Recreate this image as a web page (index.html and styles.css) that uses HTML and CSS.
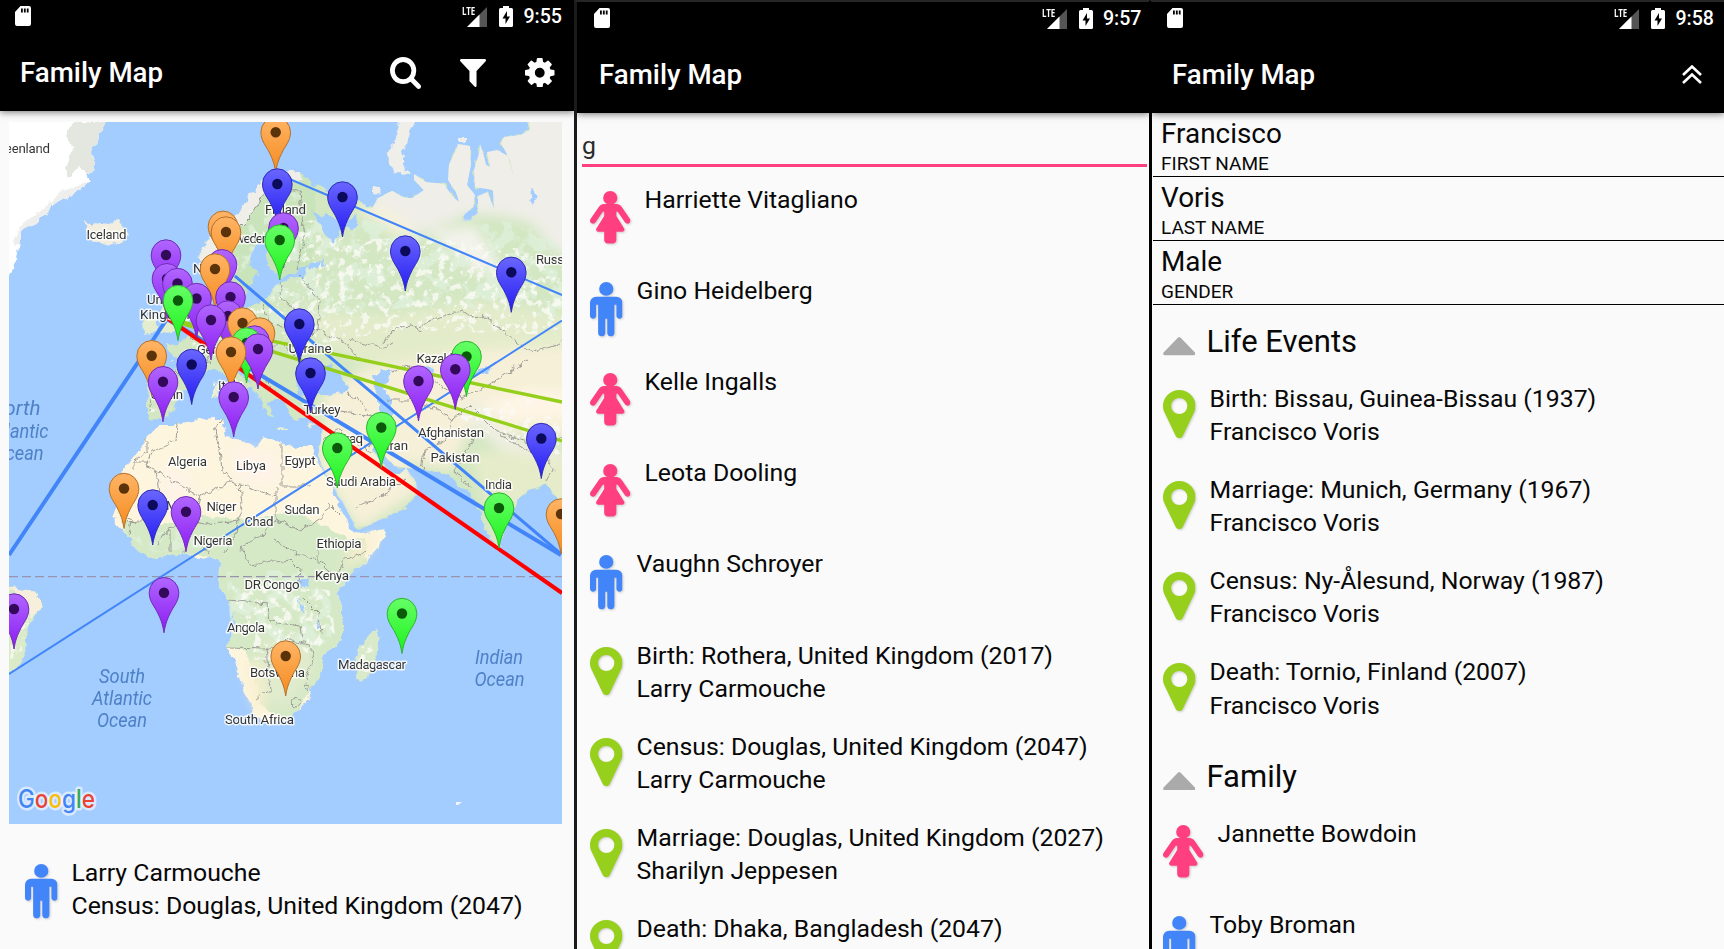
FILE: index.html
```html
<!DOCTYPE html>
<html lang="en">
<head>
<meta charset="utf-8">
<title>Family Map</title>
<link rel="stylesheet" href="styles.css">
</head>
<body>
<svg class="defs" width="0" height="0" aria-hidden="true">
  <defs>
    <symbol id="male" viewBox="0 160 1024 1760" preserveAspectRatio="none"><path d="M1024 832v416q0 40-28 68t-68 28-68-28-28-68v-352h-64v912q0 46-33 79t-79 33-79-33-33-79v-464h-64v464q0 46-33 79t-79 33-79-33-33-79v-912h-64v352q0 40-28 68t-68 28-68-28-28-68v-416q0-80 56-136t136-56h640q80 0 136 56t56 136zm-288-448q0 93-65.500 158.500t-158.500 65.500-158.500-65.500-65.500-158.500 65.500-158.500 158.500-65.500 158.500 65.500 65.500 158.500z"/></symbol>
    <symbol id="female" viewBox="0 160 1280 1760" preserveAspectRatio="none"><path d="M1280 1120q0 40-28 68t-68 28q-51 0-80-43l-227-341h-45v132l247 411q9 15 9 33 0 26-19 45t-45 19h-192v272q0 46-33 79t-79 33h-160q-46 0-79-33t-33-79v-272h-192q-26 0-45-19t-19-45q0-18 9-33l247-411v-132h-45l-227 341q-29 43-80 43-40 0-68-28t-28-68q0-29 16-53l256-384q73-107 176-107h384q103 0 176 107l256 384q16 24 16 53zm-416-736q0 93-65.500 158.500t-158.500 65.500-158.500-65.500-65.500-158.500 65.500-158.500 158.500-65.500 158.500 65.500 65.500 158.500z"/></symbol>
    <symbol id="marker" viewBox="0 128 1024 1536" preserveAspectRatio="none"><path d="M768 640q0-106-75-181t-181-75-181 75-75 181 75 181 181 75 181-75 75-181zm256 0q0 109-33 179l-364 774q-16 33-47.500 52t-67.500 19-67.500-19-46.500-52l-365-774q-33-70-33-179 0-212 150-362t362-150 362 150 150 362z"/></symbol>
    <symbol id="caret" viewBox="0 0 32 18" preserveAspectRatio="none"><path d="M14.600 .8Q16-.6 17.400.8L31.400 15Q32.600 18 30 18H2Q-.6 18 .6 15z"/></symbol>
    <symbol id="sd" viewBox="0 0 16 20"><path fill-rule="evenodd" d="M5.500 0H14q2 0 2 2v16q0 2-2 2H2q-2 0-2-2V6zM6 2.500v4h1.800v-4zm2.900 0v4h1.800v-4zm2.900 0v4h1.800v-4z"/></symbol>
    <symbol id="signal" viewBox="0 0 24 21"><path d="M24 1v20H4z" fill="#555"/><path d="M16.500 8.500V21H4z"/></symbol>
    <symbol id="battery" viewBox="0 0 14 21"><path fill-rule="evenodd" d="M4 0h6v2h2.500Q14 2 14 3.500v16q0 1.500-1.500 1.500h-11Q0 21 0 19.500v-16Q0 2 1.500 2H4zM8 5L3.500 12.500h3V18L11 10.500H8z"/></symbol>
    <linearGradient id="gOrange" x1="0" y1="0" x2="0" y2="1"><stop offset="0" stop-color="#ffb566"/><stop offset="1" stop-color="#f58a1e"/></linearGradient>
    <linearGradient id="gPurple" x1="0" y1="0" x2="0" y2="1"><stop offset="0" stop-color="#b066ff"/><stop offset="1" stop-color="#8c1cf2"/></linearGradient>
    <linearGradient id="gBlue" x1="0" y1="0" x2="0" y2="1"><stop offset="0" stop-color="#6a66ff"/><stop offset="1" stop-color="#241cf2"/></linearGradient>
    <linearGradient id="gGreen" x1="0" y1="0" x2="0" y2="1"><stop offset="0" stop-color="#66ff66"/><stop offset="1" stop-color="#1cf21c"/></linearGradient>
    <path id="drop" d="M0 40C-1 34-2 29-6 21C-9 14-14.800 9-14.800 0A14.800 15.200 0 0 1 14.800 0C14.800 9 9 14 6 21C2 29 1 34 0 40z"/>
    <g id="po"><use href="#drop" fill="url(#gOrange)" stroke="#b3702b"/><circle r="5.200" fill="#5a330a"/></g>
    <g id="pp"><use href="#drop" fill="url(#gPurple)" stroke="#6f2bb3"/><circle r="5.200" fill="#330a5a"/></g>
    <g id="pb"><use href="#drop" fill="url(#gBlue)" stroke="#2f2bb3"/><circle r="5.200" fill="#0c0a5a"/></g>
    <g id="pg"><use href="#drop" fill="url(#gGreen)" stroke="#2bb32b"/><circle r="5.200" fill="#0a5a0a"/></g>
    <filter id="rough" filterUnits="userSpaceOnUse" x="0" y="110" width="575" height="720"><feTurbulence type="fractalNoise" baseFrequency=".12" numOctaves="3" seed="4" result="n"/><feDisplacementMap in="SourceGraphic" in2="n" scale="8" xChannelSelector="R" yChannelSelector="G"/></filter>
    <filter id="speckle" filterUnits="userSpaceOnUse" x="0" y="110" width="575" height="720"><feTurbulence type="fractalNoise" baseFrequency=".13" numOctaves="4" seed="9"/><feColorMatrix values="0 0 0 0 .96  0 0 0 0 .96  0 0 0 0 .91  9 0 0 0 -4.900" result="s"/><feComposite in="s" in2="SourceGraphic" operator="in"/></filter>
    <filter id="woods" filterUnits="userSpaceOnUse" x="0" y="110" width="575" height="720"><feTurbulence type="fractalNoise" baseFrequency=".06" numOctaves="5" seed="21"/><feColorMatrix values="0 0 0 0 .74  0 0 0 0 .87  0 0 0 0 .71  10 0 0 0 -4.900" result="s"/><feComposite in="s" in2="SourceGraphic" operator="in"/></filter>
    <filter id="soft" filterUnits="userSpaceOnUse" x="0" y="60" width="640" height="780"><feGaussianBlur stdDeviation="6"/></filter>
    <path id="eurasia" d="M300 186L313 184 332 194 355 198 366 206 362 214 357 222 358 217 364 207 372 208 378 198 392 191 405 198 412 198 424 190 414 180 414 174 426 182 444 184 452 196 459 202 456 192 448 180 449 165 455 152 458 144 470 146 471 165 467 185 475 195 473 207 461 218 470 220 478 212 478 196 487 192 494 208 493 190 475 187 474 170 480 150 480 144 484 156 486 165 490 167 487 152 497 150 508 156 514 178 510 160 501 143 504 137 520 135 530 130 528 115H580V520L562 503 555 495 546 483 537 487 528 490 517 500 513 512 505 522 503 534 499 547 491 540 482 520 475 500 466 490 458 487 450 475 432 471 407 468 395 466 384 455 375 445 372 450 384 466 392 474 400 474 406 468 416 482 418 490 405 508 388 516 370 525 355 528 350 516 338 495 326 475 318 455 321 440 323 425 310 418 297 421 288 414 284 402 276 399 268 402 274 416 267 414 258 395 250 381 240 368 230 360 232 368 245 378 254 386 247 388 246 400 240 392 228 378 217 369 205 373 196 370 192 382 182 392 174 409 163 420 150 418 145 408 148 390 147 375 156 370 175 372 178 360 168 349 166 344 180 343 190 335 200 325 210 315 213 298 220 288 223 280 229 285 228 302 240 309 258 304 268 296 272 287 282 281 300 276 310 264z"/>
    <clipPath id="asia"><use href="#eurasia"/></clipPath>
  </defs>
</svg>

<main class="screens">
  <section class="screen screen-map">
    <header class="appbar">
      <div class="status">
        <svg class="sd"><use href="#sd"/></svg>
        <span class="cell"><svg class="signal"><use href="#signal"/></svg><span class="lte">LTE</span></span>
        <svg class="battery"><use href="#battery"/></svg>
        <span class="clock">9:55</span>
      </div>
      <div class="toolbar">
        <h1>Family Map</h1>
        <svg class="t-search" viewBox="0 0 1664 1664" preserveAspectRatio="none"><path d="M1152 704q0-185-131.500-316.500t-316.500-131.500-316.500 131.500-131.500 316.500 131.500 316.500 316.500 131.500 316.500-131.500 131.500-316.500zm512 832q0 52-38 90t-90 38q-54 0-90-38l-343-342q-179 124-399 124-143 0-273.500-55.500t-225-150-150-225-55.500-273.500 55.500-273.500 150-225 225-150 273.500-55.500 273.500 55.500 225 150 150 225 55.500 273.500q0 220-124 399l343 343q37 37 37 90z"/></svg>
        <svg class="t-filter" viewBox="0 0 1408 1408" preserveAspectRatio="none"><path d="M1403 39q17 41-14 70l-493 493v742q0 42-39 59-13 5-25 5-27 0-45-19l-256-256q-19-19-19-45v-486l-493-493q-31-29-14-70 17-39 59-39h1280q42 0 59 39z"/></svg>
        <svg class="t-cog" viewBox="0 -128 1536 1536" preserveAspectRatio="none"><path d="M1024 640q0-106-75-181t-181-75-181 75-75 181 75 181 181 75 181-75 75-181zm512-109v222q0 12-8 23t-20 13l-185 28q-19 54-39 91 35 50 107 138 10 12 10 25t-9 23q-27 37-99 108t-94 71q-12 0-26-9l-138-108q-44 23-91 38-16 136-29 186-7 28-36 28h-222q-14 0-24.500-8.500t-11.500-21.500l-28-184q-49-16-90-37l-141 107q-10 9-25 9-14 0-25-11-126-114-165-168-7-10-7-23 0-12 8-23 15-21 51-66.500t54-70.500q-27-50-41-99l-183-27q-13-2-21-12.500t-8-23.500v-222q0-12 8-23t19-13l186-28q14-46 39-92-40-57-107-138-10-12-10-24 0-10 9-23 26-36 98.500-107.500t94.500-71.500q13 0 26 10l138 107q44-23 91-38 16-136 29-186 7-28 36-28h222q14 0 24.500 8.500t11.500 21.500l28 184q49 16 90 37l142-107q9-9 24-9 13 0 25 10 129 119 165 170 7 8 7 22 0 12-8 23-15 21-51 66.500t-54 70.500q26 50 41 98l183 28q13 2 21 12.500t8 23.500z"/></svg>
      </div>
    </header>

    <svg class="map" viewBox="9 122 553 702">
      <rect x="9" y="122" width="553" height="702" fill="#a3ccff"/>
      <g filter="url(#rough)">
        <!-- Greenland -->
        <path fill="#fff" d="M0 110H108L100 132 97 145 92 150 95 172 86 175 90 180 80 190 65 200 52 203 50 212 40 218 33 226 22 230 17 248 18 254 12 270 0 290z"/>
        <path fill="#e3e7e0" d="M72 122H106L100 132 97 145 92 150 95 172 86 175 80 165 68 178 66 165 74 150 66 138z"/>
        <path fill="#eeeeec" d="M90 180L80 190 65 200 52 203 50 212 40 218 33 226 22 230 17 248 14 245 20 226 34 216 46 204 56 194 76 186z"/>
        <!-- Iceland -->
        <path fill="#f1eee0" d="M86 220L92 226 98 223 108 224 119 219 123 225 128 234 122 241 106 247 96 241 88 240 93 234 86 230z"/>
        <!-- Novaya Zemlya and islands -->
        <path fill="#efeee9" d="M401 118H415L409 138 402 155 406 168 410 174 398 173 388 163 387 154 395 140zM458 138h8v4h-8zM373 187l7 1-1 6-6 1z"/>
        <!-- Eurasia -->
        <use href="#eurasia" fill="#d3e7c2"/>
        <!-- Scandinavia -->
        <path fill="#c9e4bb" d="M204 274L198 258 207 240 225 225 240 211 250 195 262 181 280 170 300 172 316 184 312 262 296 272 282 277 270 271 266 256 272 240 278 232 270 226 262 240 252 250 250 265 258 275 248 287 243 302 235 308 228 290 225 276 215 280z"/>
        <path fill="#efeee9" d="M204 270L198 258 207 240 225 225 240 211 250 195 262 181 280 170 300 172 304 180 280 182 262 196 252 214 240 226 224 244 216 262z"/>
        <!-- Britain, Ireland -->
        <path fill="#e4eecf" d="M158 268L171 262 174 282 188 306 192 322 180 329 158 334 166 320 160 300zM143 318L156 314 156 330 144 336z"/>
        <!-- Mediterranean islands -->
        <path fill="#e9f0d3" d="M228 402l12-1-3 7zM213 384l5-1 1 14-6 1zM276 426l10 1v2h-10zM307 425l9-2-4 5z"/>
        <!-- Africa -->
        <path fill="#fdf5de" d="M222 417L225 437 240 440 257 448 262 440 273 438 284 444 297 447 312 447 322 470 336 497 345 520 352 532 366 533 386 529 380 546 366 562 348 577 337 593 343 610 343 638 322 657 322 673 312 687 308 700 298 712 286 720 268 724 258 719 252 706 243 690 238 667 228 647 235 622 228 600 218 582 220 563 210 557 200 559 187 553 173 555 152 559 137 549 125 534 115 525 114 512 122 487 123 470 133 457 143 447 147 437 160 425 173 425 193 420 215 418z"/>
        <path fill="#d6e9c6" d="M122 520L160 524 205 516 250 520 290 510 320 524 346 538 366 540 366 562 348 577 337 593 343 610 343 638 322 657 322 673 312 687 298 712 286 720 262 706 246 650 228 646 235 622 228 600 218 582 220 563 210 557 187 553 152 559 137 549 125 534z"/>
        <!-- Madagascar, South America, Kerguelen -->
        <path fill="#d8eaca" d="M377 628L381 637 377 655 368 678 362 681 356 677 357 650 363 642z"/>
        <path fill="#dbebc8" d="M0 585L20 588 35 592 43 604 41 612 27 625 25 655 15 670 0 680z"/>
        <path fill="#f6efdc" d="M9 588L20 588 35 592 43 604 41 612 30 618 22 600z"/>
      </g>
      <path fill="#f4f6f8" d="M456 802h6l-4 3h-2z"/>
      <!-- climate tints, blurred into the land -->
      <g clip-path="url(#asia)">
        <g filter="url(#soft)">
          <path fill="#efeee8" d="M372 150L600 90V260L555 252 530 222 500 216 470 214 440 226 415 234 395 224 370 210z"/>
          <path fill="#f6f1dc" d="M352 206l30 0 24 14 14 20-24-4z"/>
          <path fill="#f3f3ec" d="M425 232l50-6 20 30 10 24-30-8-22-22z"/>
          <path fill="#e3ecca" d="M290 310L380 315 420 310 480 300 600 320V370L400 380 330 350z"/>
          <path fill="#f6f0d8" d="M360 370L470 350 600 345V440L470 430 450 470 400 460 330 440 320 400z"/>
          <path fill="#fff5e6" d="M480 405l50-15 70 5v20l-90 5zM330 455l60 5 20 30-50 25z"/>
          <path fill="#f6f0d8" d="M315 430l60 10 30 20 15 30-60 40-40-60z"/>
          <path fill="#e6ecca" d="M470 452L600 450V500L500 550z"/>
          <path fill="#f0efe2" d="M462 400l20 4 30 34 50 14v8l-60-10-36-30z"/>
        </g>
      </g>
      <g filter="url(#soft)">
        <path fill="#fff3ea" d="M228 445l50 10v30l-40-4zM160 465l30 10v25h-26z" opacity=".8"/>
        <path fill="#f8efcf" d="M352 545l26-12-12 22-24 14zM244 660l10 46 12 8-4-50z"/>
        <path fill="#e1ebcd" d="M262 640l44 0 8 30-30 38-16-10z"/>
      </g>
      <!-- vegetation and open ground texture -->
      <path filter="url(#woods)" opacity=".8" d="M262 205L300 190 312 215 340 232 360 218 410 232 440 248 500 270 562 275V318L440 305 380 310 300 320 225 345 185 350 250 320 275 285 300 276 310 262 268 258zM470 228L500 220 540 230 562 250V280L500 268zM226 572L300 570 330 600 335 640 300 650 232 640zM130 535L185 530 215 548 190 548 150 553zM482 490L506 500 500 540zM228 235l22-14 10 16-14 30-14 14z"/>
      <path filter="url(#speckle)" opacity=".8" d="M262 230L312 220 350 240 400 238 460 240 562 255V335L400 330 310 345 240 345 190 355 170 362 220 320 300 285 310 262 270 262zM455 415L530 395 562 430V458L500 440zM232 585L330 590 335 635 300 660 250 660zM150 380h36l-16 32-20 0zM362 640l12 4-6 28-8 0zM12 610l20 0-8 40-14 16z"/>
      <!-- seas and lakes -->
      <g filter="url(#rough)" fill="#a3ccff">
        <path d="M312 212L330 217 345 222 357 216 358 225 340 230 334 244 326 238 320 226z"/>
        <path d="M296 378L300 364 312 358 318 366 330 364 346 382 347 392 330 395 312 391 298 396z"/>
        <path d="M372 378L380 370 392 370 388 380 384 386 392 400 392 416 384 420 378 410 378 396z"/>
        <path d="M425 366l8 2-1 9-7-2zM470 372l20-6 2 3-20 8zM310 262l10-2-2 8-9 3zM298 268l8 0-2 10-8 0zM322 258l4 8-5 0zM530 186l8 10-6 12z"/>
        <path d="M298 578l11 0-1 9-9 1zM298 596l4 10 3 8-4-3zM317 615l4 14-3 1z"/>
      </g>
      <!-- national borders -->
      <g class="borders" filter="url(#rough)">
        <path d="M222 417L216 430 220 450 222 470 230 480M147 437L147 452 133 462M177 424L176 440 152 452 146 465 200 497 230 482 240 484 276 496M282 444V486H312M276 486V497L276 520M134 470V462H147M156 470 160 500 158 520 124 522M118 512l14 8-2 14M200 497L194 520 170 528 158 545M194 522 205 524 238 520 242 505 240 484M238 520L236 535 225 552M276 520L262 535 240 548 252 565M276 520 300 530 318 520 330 505 340 515M275 540 300 555 318 560 330 572M318 560 336 576 345 560 366 552M250 565 290 560 300 570 298 590M228 600 268 604 270 622 300 626 302 640M228 647 266 648 270 690 256 700M266 650 290 640 310 644 313 660 305 680M170 530v22M187 525l-2 28M200 540l10 14M318 545v20M300 595l20 20 2 20"/>
        <path d="M293 706c-4-6 0-10 5-8s2 8-2 9zM304 684l8 1-4 6z"/>
        <path d="M252 214L262 196 285 192 300 190 304 240 296 270M228 290L232 250 240 226 252 214"/>
        <path d="M280 281L282 300 296 310 318 330 300 340 270 320 262 306M300 276 320 300 318 330 345 342 360 360M216 318 228 330 250 326 262 345 285 345 296 358M190 335 204 345 210 365M230 345 245 352 262 348 256 370 275 392M148 375 156 382 152 400 150 412M175 372 198 376M236 325V305"/>
        <path d="M420 326L440 318 462 310 472 318 488 316 500 330 520 345 530 352 562 342M380 345 394 330 410 326 424 330M430 385 410 400 386 400M392 372 410 365 440 385 462 398 480 390 500 378 528 360M414 402 440 410 452 420 445 440 425 450 422 470M452 420 470 405 480 415 495 430 520 440 545 445 562 438M330 410 350 412 372 416 380 440 370 448M322 440 340 430 356 445 372 452M355 508 382 496 405 480M470 488 455 470 468 448 480 432M545 450 552 470 546 480M348 393 360 400 368 412M500 435l35 20 12-6M350 340l30 8 14-4"/>
      </g>
      <path class="equator" d="M9 576.700H562"/>

      <g class="ocean">
        <text x="-10" y="415" textLength="50.500" lengthAdjust="spacingAndGlyphs">North</text><text x="-11.500" y="437.500" textLength="60" lengthAdjust="spacingAndGlyphs">Atlantic</text><text x="-6.500" y="460" textLength="50" lengthAdjust="spacingAndGlyphs">Ocean</text>
        <text x="99" y="682.500" textLength="46" lengthAdjust="spacingAndGlyphs">South</text><text x="92" y="704.500" textLength="60" lengthAdjust="spacingAndGlyphs">Atlantic</text><text x="97" y="726.500" textLength="50" lengthAdjust="spacingAndGlyphs">Ocean</text>
        <text x="475" y="664" textLength="48" lengthAdjust="spacingAndGlyphs">Indian</text><text x="474.500" y="686" textLength="50" lengthAdjust="spacingAndGlyphs">Ocean</text>
      </g>

      <g class="routes">
        <path class="thin" d="M279 174.500L562 295M562 320.500L9 674"/>
        <path class="mid" d="M222 265L561 554"/>
        <path class="thick" d="M167 319L9 555M167 319L561 555"/>
        <path class="lime" d="M167 319L562 402M167 319L562 441"/>
        <path class="red" d="M167 318L562 593"/>
      </g>

      <g class="country">
        <text x="-8" y="152.500" textLength="58">Greenland</text><text x="86.500" y="238.500" textLength="40">Iceland</text>
        <text x="265" y="213.500" textLength="41">Finland</text><text x="228" y="243" textLength="41">Sweden</text>
        <text x="193" y="273" textLength="44">Norway</text><text x="147" y="304" textLength="38">United</text><text x="140" y="318.500" textLength="54">Kingdom</text>
        <text x="197" y="354" textLength="50">Germany</text><text x="288.500" y="353" textLength="43">Ukraine</text><text x="218" y="390" textLength="24">Italy</text><text x="151" y="399" textLength="32">Spain</text>
        <text x="536" y="263.500" textLength="38">Russia</text><text x="416.500" y="362.500" textLength="64">Kazakhstan</text><text x="303.500" y="413.500" textLength="37">Turkey</text><text x="343" y="443" textLength="20">Iraq</text><text x="386" y="450" textLength="22">Iran</text>
        <text x="418" y="436.500" textLength="66">Afghanistan</text><text x="430.500" y="461.500" textLength="49">Pakistan</text><text x="485" y="488.500" textLength="27">India</text><text x="326" y="485.500" textLength="70">Saudi Arabia</text>
        <text x="168" y="465.500" textLength="39">Algeria</text><text x="236" y="470" textLength="30">Libya</text><text x="284.500" y="464.500" textLength="31">Egypt</text><text x="206.500" y="511" textLength="30">Niger</text><text x="166" y="510" textLength="22">Mali</text><text x="244.500" y="526" textLength="29">Chad</text><text x="284.500" y="514" textLength="35">Sudan</text><text x="193.500" y="544.500" textLength="39">Nigeria</text><text x="316.500" y="548" textLength="45">Ethiopia</text><text x="315" y="580" textLength="34">Kenya</text>
        <text x="244.500" y="588.500" textLength="55">DR Congo</text><text x="227" y="631.500" textLength="38">Angola</text><text x="250" y="677" textLength="55">Botswana</text><text x="225" y="723.500" textLength="69">South Africa</text><text x="338" y="669" textLength="68">Madagascar</text>
      </g>

      <g class="pins">
        <use href="#po" x="275.700" y="132.300"/><use href="#pb" x="277.300" y="184"/><use href="#pb" x="342.500" y="197"/>
        <use href="#po" x="223" y="226.300"/><use href="#pp" x="283.500" y="228"/><use href="#po" x="226" y="232"/><use href="#pg" x="279.700" y="240"/>
        <use href="#pb" x="405.300" y="251"/><use href="#pp" x="166" y="255"/><use href="#pp" x="222" y="264.700"/><use href="#po" x="215" y="269"/><use href="#pb" x="511.300" y="272.300"/>
        <use href="#pp" x="167" y="278.700"/><use href="#pp" x="177.500" y="283.500"/><use href="#pp" x="196.500" y="298.500"/><use href="#pp" x="230.500" y="297"/><use href="#pg" x="178" y="300.500"/>
        <use href="#pp" x="228" y="316"/><use href="#pp" x="211" y="320"/><use href="#po" x="242.500" y="323"/><use href="#pb" x="299.300" y="324"/><use href="#po" x="260" y="333"/>
        <use href="#pp" x="254.500" y="341"/><use href="#pg" x="246.500" y="343"/><use href="#pp" x="258" y="349"/><use href="#po" x="231" y="352"/><use href="#po" x="151.700" y="355.700"/>
        <use href="#pg" x="466.500" y="356.500"/><use href="#pb" x="191.700" y="364.500"/><use href="#pp" x="455.300" y="369.300"/><use href="#pb" x="310.500" y="373"/><use href="#pp" x="418.500" y="381"/>
        <use href="#pp" x="163" y="381.700"/><use href="#pp" x="233.700" y="397"/><use href="#pg" x="381.300" y="427.500"/><use href="#pb" x="541.300" y="438.500"/><use href="#pg" x="337.300" y="448"/>
        <use href="#po" x="124" y="488.500"/><use href="#pb" x="152.700" y="505"/><use href="#pg" x="499" y="508"/><use href="#pp" x="186" y="511.700"/><use href="#po" x="561" y="514"/>
        <use href="#pp" x="164" y="592.700"/><use href="#pp" x="14" y="609"/><use href="#pg" x="402" y="613.500"/><use href="#po" x="285.700" y="656"/>
      </g>
      <text class="google" x="18" y="807.500" textLength="77" lengthAdjust="spacingAndGlyphs"><tspan fill="#4285f4">G</tspan><tspan fill="#ea4335">o</tspan><tspan fill="#fbbc05">o</tspan><tspan fill="#4285f4">g</tspan><tspan fill="#34a853">l</tspan><tspan fill="#ea4335">e</tspan></text>
    </svg>

    <div class="row selected"><svg class="icon male"><use href="#male"/></svg><p>Larry Carmouche<br>Census: Douglas, United Kingdom (2047)</p></div>
  </section>

  <section class="screen screen-search">
    <header class="appbar">
      <div class="status">
        <svg class="sd"><use href="#sd"/></svg>
        <span class="cell"><svg class="signal"><use href="#signal"/></svg><span class="lte">LTE</span></span>
        <svg class="battery"><use href="#battery"/></svg>
        <span class="clock">9:57</span>
      </div>
      <div class="toolbar"><h1>Family Map</h1></div>
    </header>
    <div class="query">g</div>
    <div class="list">
      <div class="row"><svg class="icon female"><use href="#female"/></svg><p>Harriette Vitagliano</p></div>
      <div class="row"><svg class="icon male"><use href="#male"/></svg><p>Gino Heidelberg</p></div>
      <div class="row"><svg class="icon female"><use href="#female"/></svg><p>Kelle Ingalls</p></div>
      <div class="row"><svg class="icon female"><use href="#female"/></svg><p>Leota Dooling</p></div>
      <div class="row"><svg class="icon male"><use href="#male"/></svg><p>Vaughn Schroyer</p></div>
      <div class="row"><svg class="icon marker"><use href="#marker"/></svg><p>Birth: Rothera, United Kingdom (2017)<br>Larry Carmouche</p></div>
      <div class="row"><svg class="icon marker"><use href="#marker"/></svg><p>Census: Douglas, United Kingdom (2047)<br>Larry Carmouche</p></div>
      <div class="row"><svg class="icon marker"><use href="#marker"/></svg><p>Marriage: Douglas, United Kingdom (2027)<br>Sharilyn Jeppesen</p></div>
      <div class="row"><svg class="icon marker"><use href="#marker"/></svg><p>Death: Dhaka, Bangladesh (2047)</p></div>
    </div>
  </section>

  <section class="screen screen-person">
    <header class="appbar">
      <div class="status">
        <svg class="sd"><use href="#sd"/></svg>
        <span class="cell"><svg class="signal"><use href="#signal"/></svg><span class="lte">LTE</span></span>
        <svg class="battery"><use href="#battery"/></svg>
        <span class="clock">9:58</span>
      </div>
      <div class="toolbar"><h1>Family Map</h1><svg class="t-top" viewBox="0 0 20 19"><path d="M1 10L10 1.500 19 10M1 18L10 9.500 19 18"/></svg></div>
    </header>
    <dl class="facts">
      <div><dd>Francisco</dd><dt>FIRST NAME</dt></div>
      <div><dd>Voris</dd><dt>LAST NAME</dt></div>
      <div><dd>Male</dd><dt>GENDER</dt></div>
    </dl>
    <div class="group"><svg class="caret"><use href="#caret"/></svg><h2>Life Events</h2></div>
    <div class="list">
      <div class="row"><svg class="icon marker"><use href="#marker"/></svg><p>Birth: Bissau, Guinea-Bissau (1937)<br>Francisco Voris</p></div>
      <div class="row"><svg class="icon marker"><use href="#marker"/></svg><p>Marriage: Munich, Germany (1967)<br>Francisco Voris</p></div>
      <div class="row"><svg class="icon marker"><use href="#marker"/></svg><p>Census: Ny-Ålesund, Norway (1987)<br>Francisco Voris</p></div>
      <div class="row"><svg class="icon marker"><use href="#marker"/></svg><p>Death: Tornio, Finland (2007)<br>Francisco Voris</p></div>
    </div>
    <div class="group"><svg class="caret"><use href="#caret"/></svg><h2>Family</h2></div>
    <div class="list">
      <div class="row"><svg class="icon female"><use href="#female"/></svg><p>Jannette Bowdoin</p></div>
      <div class="row"><svg class="icon male"><use href="#male"/></svg><p>Toby Broman</p></div>
    </div>
  </section>
</main>
</body>
</html>
```
FILE: styles.css
```css
* { box-sizing: border-box; }
html, body { margin: 0; height: 100%; overflow: hidden; }
body { background: #fafafa; color: #080808; font-family: Roboto, "Liberation Sans", sans-serif; }
h1, h2, p, dl, dd, dt { margin: 0; font-weight: 400; }
svg { display: block; flex: none; }
.defs { position: absolute; }

.screens { display: grid; grid-template-columns: 574px 575px 575px; height: 949px; overflow: hidden; }
.screen { display: flex; flex-direction: column; min-width: 0; height: 949px; overflow: hidden; background: #fafafa; }
.screen-search { border-left: 3px solid #1b1b1b; border-top: 2px solid #262626; }
.screen-person { border-left: 3px solid #000; border-top: 2px solid #262626; }

/* App bar */
.appbar { flex: none; background: #000; color: #fff; fill: #fff; box-shadow: 0 1px 7px rgba(0, 0, 0, .55); }
.status { display: flex; align-items: center; height: 36px; padding: 0 12px 4px 15px; }
.screen-search .status { padding-left: 17px; padding-right: 7.500px; }
.screen-person .status { padding-right: 10px; }
.sd { width: 16px; height: 20px; margin-right: auto; }
.cell { position: relative; width: 24px; height: 21px; }
.signal { width: 24px; height: 21px; }
.lte { position: absolute; left: -1px; top: 0; font: 700 11px/10px "Open Sans", Roboto, sans-serif; transform: scaleX(.72); transform-origin: 0 0; letter-spacing: -.3px; }
.battery { width: 14px; height: 21px; margin: 0 10px 0 12px; }
.clock { font-size: 19.600px; font-weight: 500; line-height: 22px; padding-top: 2px; }
.toolbar { display: flex; align-items: center; height: 75px; padding: 0 19.500px 2px 20px; }
.screen-search .toolbar { padding-left: 22px; }
.toolbar h1 { margin-right: auto; padding-top: 1px; font-size: 27.700px; font-weight: 500; line-height: 34px; }
.t-search { width: 31px; height: 32px; margin-right: 39px; }
.t-filter { width: 26px; height: 28px; margin-right: 39px; }
.t-cog { width: 29.500px; height: 29.500px; }
.t-top { width: 20px; height: 19px; margin-right: 2px; fill: none; stroke: #fff; stroke-width: 2.600; }
.screen-person .toolbar { padding-right: 20px; }

/* Map */
.map { width: 553px; height: 702px; margin: 11px 0 0 9px; font-family: Roboto, sans-serif; }
.borders { fill: none; stroke: #94948e; stroke-width: .9; }
.equator { stroke: #9a93ae; stroke-width: 1.200; stroke-dasharray: 9 4; }
.ocean { font-size: 20.500px; font-style: italic; fill: #4e80c6; }
.country { font-size: 13.300px; fill: #333; stroke: rgba(255, 255, 255, .8); stroke-width: 3; stroke-linejoin: round; paint-order: stroke; }
.routes { fill: none; stroke: #4285f9; }
.thin { stroke-width: 2; }
.mid { stroke-width: 3; }
.thick { stroke-width: 4; }
.lime { stroke: #95cf1c; stroke-width: 3.400; }
.red { stroke: #f00; stroke-width: 4; }
.google { font: 500 25px Inter, sans-serif; stroke: rgba(255, 255, 255, .6); stroke-width: 5; stroke-linejoin: round; paint-order: stroke; }

/* People and events */
.row { display: flex; align-items: flex-start; height: 91.200px; padding: 0 0 0 13px; font-size: 24.800px; line-height: 33.200px; white-space: nowrap; }
.row p { margin-left: 14px; }
.icon { margin-top: 8px; filter: drop-shadow(1px 1px 1px rgba(0, 0, 0, .18)); overflow: visible; }
.male { width: 32.500px; height: 54.500px; fill: #4285f9; }
.female { width: 40.500px; height: 54.500px; fill: #ff3f80; }
.marker { width: 32.500px; height: 48px; fill: #96cf1c; }
.selected { margin-top: 31.800px; padding-left: 25px; }
.query { flex: none; height: 38px; margin: 16px 2px 0 5px; border-bottom: 3px solid #ff3f80; color: #2b2b2b; font-size: 24.800px; line-height: 34px; }
.screen-search .list { padding-top: 15.600px; }

/* Person details */
.facts { flex: none; padding-left: 1px; }
.facts div { height: 64px; padding: 4px 0 0 8px; border-bottom: 1.500px solid #000; }
.facts dd { font-size: 27.900px; line-height: 33px; }
.facts dt { font-size: 19px; line-height: 27px; }
.group { flex: none; display: flex; align-items: flex-start; height: 76.800px; padding: 18px 0 0 11px; }
.group h2 { margin-left: 11px; font-size: 31px; line-height: 38px; }
.caret { width: 32.500px; height: 18.500px; margin-top: 14px; fill: #aaa; }
.screen-person .list { flex: none; }
.screen-person .row { padding-left: 11px; }
.screen-person .list + .group { height: 70px; padding-top: 11px; }
```
